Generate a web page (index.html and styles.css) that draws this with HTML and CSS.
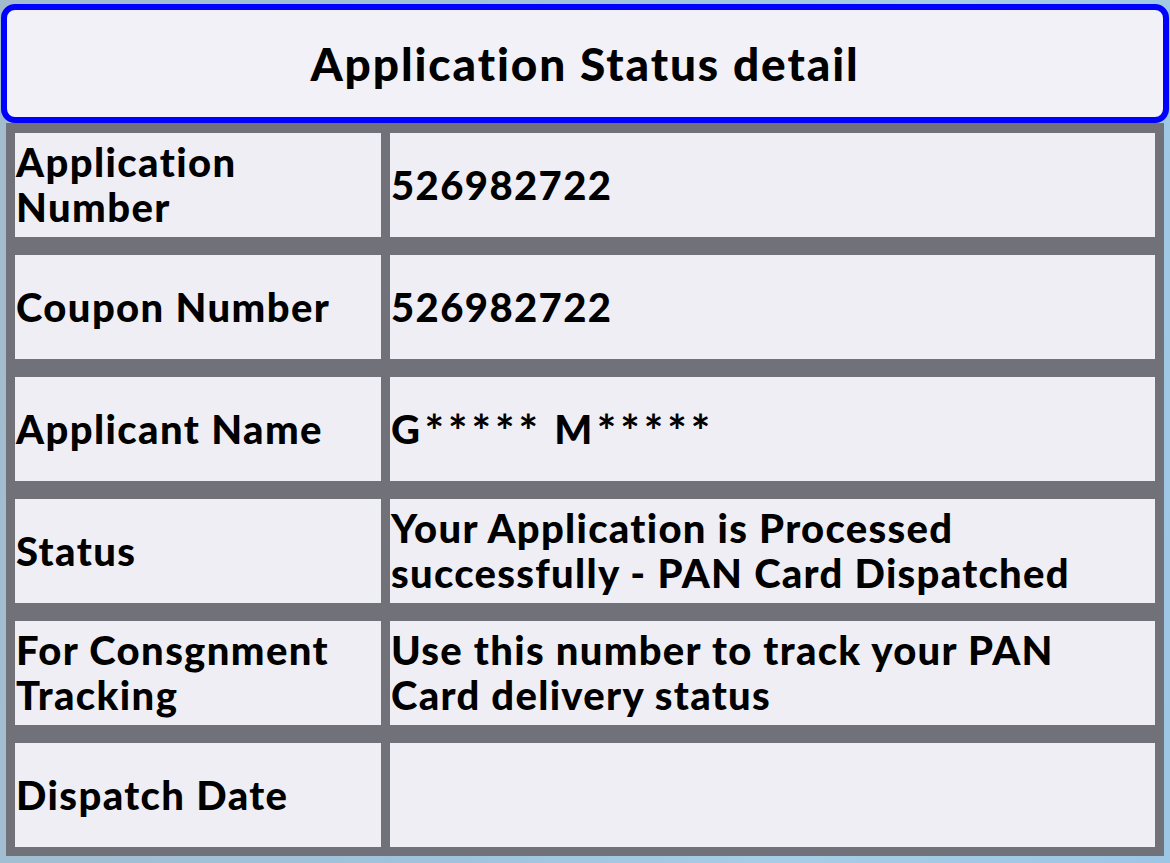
FILE: index.html
```html
<!DOCTYPE html>
<html>
<head>
<meta charset="utf-8">
<link rel="stylesheet" href="styles.css">
</head>
<body>
<div class="page">
  <div class="title-box">
    <h1 class="title">Application Status detail</h1>
  </div>
  <div class="grid">
    <div class="cell label">Application<br>Number</div>
    <div class="cell value">526982722</div>
    <div class="cell label">Coupon Number</div>
    <div class="cell value">526982722</div>
    <div class="cell label">Applicant Name</div>
    <div class="cell value">G<span class="stars">*****</span>M<span class="stars">*****</span></div>
    <div class="cell label">Status</div>
    <div class="cell value wide">Your Application is Processed<br>successfully - PAN Card Dispatched</div>
    <div class="cell label">For Consgnment<br>Tracking</div>
    <div class="cell value wide">Use this number to track your PAN<br>Card delivery status</div>
    <div class="cell label">Dispatch Date</div>
    <div class="cell value"></div>
  </div>
</div>
</body>
</html>
```
FILE: styles.css
```css
html, body {
  margin: 0;
  padding: 0;
}
body {
  width: 1170px;
  height: 863px;
  overflow: hidden;
  background: linear-gradient(100deg, #a3bccd 0%, #9fc3dc 45%, #a6cde6 70%, #9cc6e4 100%);
  font-family: "Lato", "Noto Sans", sans-serif;
  font-weight: 900;
  color: #000;
}
.page {
  padding-top: 4px;
}
.title-box {
  margin-left: 1px;
  width: 1156px;
  height: 107px;
  border: 6px solid #0000ff;
  border-radius: 14px;
  background: #f2f1f8;
  display: flex;
  align-items: center;
  justify-content: center;
}
.title {
  margin: 0;
  font-size: 46px;
  font-weight: 900;
  letter-spacing: 1.9px;
}
.grid {
  margin-left: 6px;
  width: 1140px;
  padding: 10px 9px 9px 9px;
  background: #707179;
  display: grid;
  grid-template-columns: 366px 765px;
  grid-auto-rows: 104px;
  column-gap: 9px;
  row-gap: 18px;
}
.cell {
  background: #efeef5;
  display: flex;
  align-items: center;
  padding-left: 1px;
  font-size: 40px;
  line-height: 45px;
  letter-spacing: 1.4px;
}
.value {
  padding-left: 1px;
}
.wide {
  letter-spacing: 1.3px;
}
.stars {
  display: inline-block;
  font-size: 46px;
  font-weight: 700;
  letter-spacing: 4px;
  margin-left: 3px;
  margin-right: 12px;
  position: relative;
  top: 1px;
}
```
